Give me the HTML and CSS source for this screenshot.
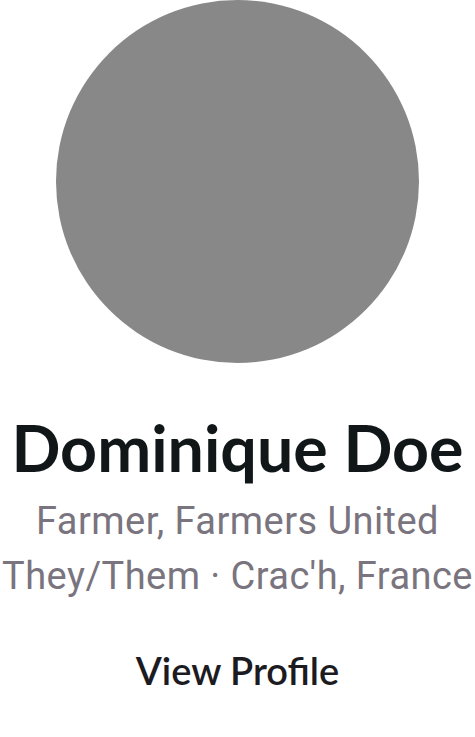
FILE: index.html
```html
<!DOCTYPE html>
<html>
<head>
<meta charset="utf-8">
<link rel="stylesheet" href="styles.css">
</head>
<body>
<div class="card">
  <div class="avatar"></div>
  <h1 class="name">Dominique Doe</h1>
  <p class="meta meta-first">Farmer, Farmers United</p>
  <p class="meta">They/Them · Crac'h, France</p>
  <div class="action">View Profile</div>
</div>
</body>
</html>
```
FILE: styles.css
```css
html, body {
  margin: 0;
  padding: 0;
  background: #ffffff;
}
.card {
  display: flex;
  flex-direction: column;
  align-items: center;
  width: 475px;
}
.avatar {
  width: 363px;
  height: 363px;
  border-radius: 50%;
  background: #888888;
}
.name {
  margin: 46px 0 0;
  font-family: Lato, sans-serif;
  font-weight: 700;
  font-size: 64.5px;
  line-height: 77.4px;
  color: #111719;
  white-space: nowrap;
}
.meta {
  margin: 0;
  font-family: Roboto, sans-serif;
  font-size: 38px;
  line-height: 55px;
  letter-spacing: 0.45px;
  color: #79747e;
  white-space: nowrap;
}
.meta-first {
  margin-top: 8px;
}
.action {
  margin-top: 43px;
  font-family: Lato, sans-serif;
  font-weight: 600;
  font-size: 38px;
  line-height: 46px;
  color: #1c1b1f;
}
```
